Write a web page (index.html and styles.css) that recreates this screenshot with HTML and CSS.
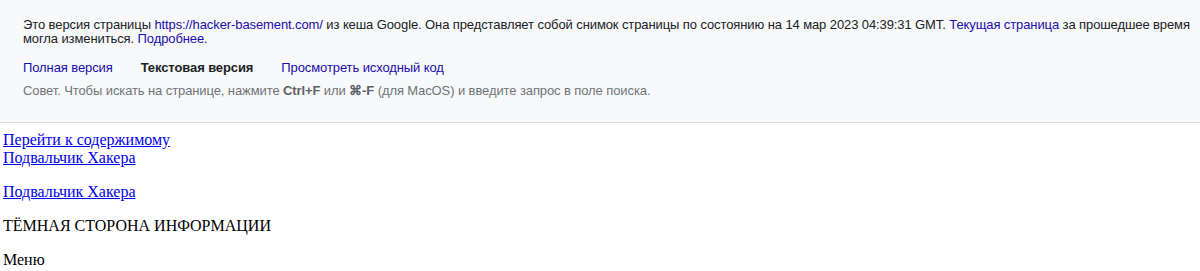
FILE: index.html
```html
<!DOCTYPE html>
<html lang="ru">
<head>
<meta charset="utf-8">
<title>Подвальчик Хакера</title>
<link rel="stylesheet" href="styles.css">
</head>
<body>
<div class="cache-hdr">
  <div class="cache-inner">
    <div class="cache-msg">Это версия страницы <a href="#">https://hacker-basement.com/</a> из кеша Google. Она представляет собой снимок страницы по состоянию на 14 мар 2023 04:39:31 GMT. <a href="#">Текущая страница</a> за прошедшее время могла измениться. <a href="#">Подробнее</a>.</div>
    <div class="cache-links">
      <a href="#">Полная версия</a>
      <span class="current">Текстовая версия</span>
      <a href="#">Просмотреть исходный код</a>
    </div>
    <div class="cache-tip">Совет. Чтобы искать на странице, нажмите <b>Ctrl+F</b> или <b>⌘-F</b> (для MacOS) и введите запрос в поле поиска.</div>
  </div>
</div>
<div class="page">
  <a class="plain" href="#">Перейти к содержимому</a><br>
  <a class="plain" href="#">Подвальчик Хакера</a>
  <p><a class="plain" href="#">Подвальчик Хакера</a></p>
  <p>ТЁМНАЯ СТОРОНА ИНФОРМАЦИИ</p>
  <p>Меню</p>
</div>
</body>
</html>
```
FILE: styles.css
```css
html, body {
  margin: 0;
  padding: 0;
  background: #fff;
}
body {
  font-family: "Liberation Serif", "Times New Roman", serif;
  font-size: 16px;
  color: #000;
}
.cache-hdr {
  background: #f8f9fa;
  border-bottom: 1px solid #dadce0;
  font-family: "Liberation Sans", Arial, sans-serif;
  font-size: 13px;
  letter-spacing: -0.1px;
  color: #202124;
}
.cache-inner {
  padding: 18px 8px 24px 23px;
}
.cache-msg {
  line-height: 14px;
}
.cache-hdr a {
  color: #1a0dab;
  text-decoration: none;
}
.cache-links {
  display: flex;
  gap: 28px;
  margin-top: 15px;
  line-height: 14px;
}
.cache-links .current {
  font-weight: bold;
  color: #202124;
}
.cache-tip {
  margin-top: 9px;
  color: #70757a;
  line-height: 14px;
}
.cache-tip b {
  color: #5f6368;
  font-weight: bold;
}
.page {
  padding: 8px 3px 0 3px;
}
.page p {
  margin: 16px 0;
}
a.plain {
  color: #0000ee;
}
```
